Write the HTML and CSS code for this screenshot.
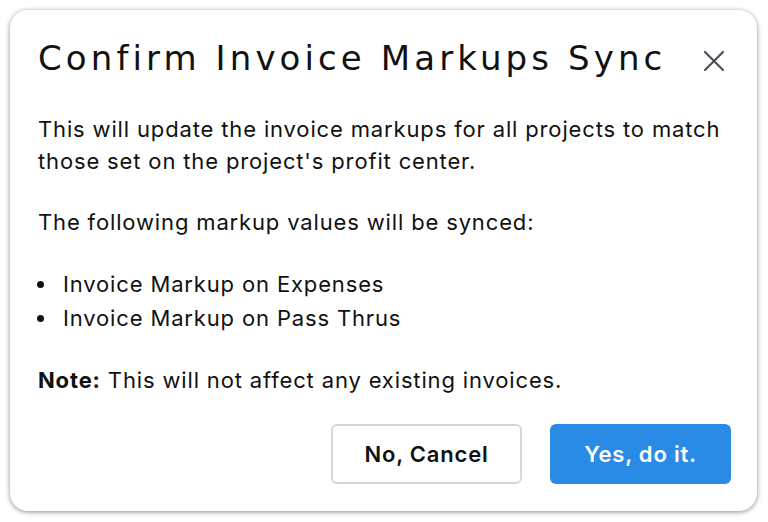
FILE: index.html
```html
<!DOCTYPE html>
<html>
<head>
<meta charset="utf-8">
<link rel="stylesheet" href="styles.css">
</head>
<body>
<div class="dialog">
  <div class="header">
    <h1 class="title">Confirm Invoice Markups Sync</h1>
    <button class="close" aria-label="Close">
      <svg width="22" height="22" viewBox="0 0 22 22"><path d="M2 2 L20 20 M20 2 L2 20" stroke="#4b5058" stroke-width="2.2" stroke-linecap="round" fill="none"/></svg>
    </button>
  </div>
  <div class="body">
    <p class="para">This will update the invoice markups for all projects to match those set on the project's profit center.</p>
    <p class="para">The following markup values will be synced:</p>
    <ul class="list">
      <li class="item">Invoice Markup on Expenses</li>
      <li class="item">Invoice Markup on Pass Thrus</li>
    </ul>
    <p class="para para-last"><strong>Note:</strong> This will not affect any existing invoices.</p>
  </div>
  <div class="footer">
    <button class="btn btn-secondary">No, Cancel</button>
    <button class="btn btn-primary">Yes, do it.</button>
  </div>
</div>
</body>
</html>
```

FILE: styles.css
```css
html, body {
  margin: 0;
  padding: 0;
  background: #ffffff;
}
body {
  padding: 10px 11px 11px 10px;
  font-family: "Inter", "Noto Sans", sans-serif;
  color: #111111;
}
.dialog {
  box-sizing: border-box;
  width: 747px;
  height: 501px;
  background: #fff;
  border-radius: 18px;
  box-shadow: 0 1px 5px rgba(0,0,0,0.45);
  padding: 0 26px 0 28px;
  display: flex;
  flex-direction: column;
}
.header {
  flex: none;
  display: flex;
  align-items: center;
  justify-content: space-between;
  height: 103px;
  padding-bottom: 7px;
  box-sizing: border-box;
}
.title {
  margin: 0;
  font-family: "DejaVu Sans", sans-serif;
  font-weight: 400;
  font-size: 34px;
  letter-spacing: 4.1px;
  color: #111;
}
.close {
  background: none;
  border: 0;
  padding: 0;
  margin: 5px 6px 0 0;
  width: 22px;
  height: 22px;
  display: flex;
}
.body {
  flex: none;
  font-size: 22px;
  line-height: 32px;
  letter-spacing: 0.85px;
}
.para {
  margin: 0 0 29px 0;
}
.para-last {
  margin-bottom: 0;
}
.list {
  margin: 0 0 29px 0;
  padding: 0;
  list-style: none;
  line-height: 34px;
}
.item {
  display: flex;
  align-items: center;
}
.item::before {
  content: "";
  width: 7px;
  height: 7px;
  border-radius: 50%;
  background: #111;
  margin: 0 19px 0 -1px;
  flex: none;
}
.footer {
  flex: none;
  display: flex;
  justify-content: flex-end;
  gap: 28px;
  margin-top: auto;
  margin-bottom: 27px;
}
.btn {
  height: 60px;
  border-radius: 6px;
  font-family: "Inter", sans-serif;
  font-size: 22px;
  font-weight: 600;
  letter-spacing: 0.8px;
  cursor: pointer;
}
.btn-secondary {
  width: 191px;
  background: #fff;
  border: 2px solid #d4d7dc;
  color: #111;
}
.btn-primary {
  width: 181px;
  background: #2a8be6;
  border: 0;
  color: #fff;
}
```
